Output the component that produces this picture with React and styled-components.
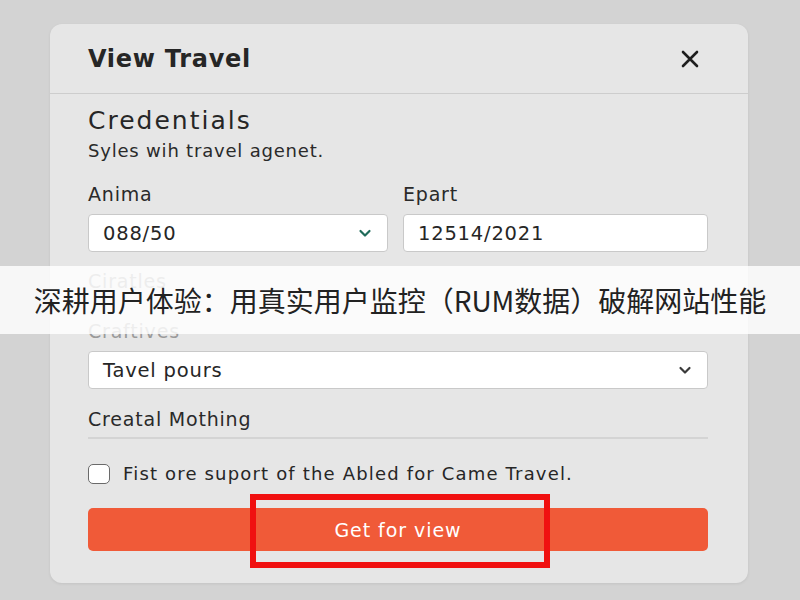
import React from 'react';
import styled, { createGlobalStyle } from 'styled-components';

const GlobalStyle = createGlobalStyle`
  html, body {
    margin: 0;
    padding: 0;
    background: #d3d3d3;
    font-family: "DejaVu Sans", "Noto Sans", sans-serif;
  }
`;

const Page = styled.div`
  position: relative;
  width: 800px;
  height: 600px;
  padding: 24px 52px 17px 50px;
  box-sizing: border-box;
  overflow: hidden;
`;

const Card = styled.div`
  background: #e6e6e6;
  border-radius: 12px;
  height: 100%;
  box-shadow: 0 1px 3px rgba(0, 0, 0, 0.08);
  display: flex;
  flex-direction: column;
`;

const Header = styled.div`
  display: flex;
  align-items: center;
  justify-content: space-between;
  height: 69px;
  padding: 0 48px 0 38px;
  border-bottom: 1px solid #cdcdcd;
`;

const Title = styled.h1`
  margin: 0;
  font-size: 24px;
  font-weight: 700;
  letter-spacing: 0.03em;
  color: #262626;
`;

const Close = styled.button`
  border: 0;
  background: none;
  padding: 0;
  display: flex;
  color: #1e1e1e;
`;

const Body = styled.div`
  padding: 12px 40px 0 38px;
  display: flex;
  flex-direction: column;
  letter-spacing: 0.05em;
`;

const Heading = styled.h2`
  margin: 0;
  font-size: 25px;
  font-weight: 400;
  letter-spacing: 0.08em;
  color: #262626;
  line-height: 30px;
`;

const Sub = styled.p`
  margin: 4px 0 0;
  font-size: 18px;
  color: #2a2a2a;
  line-height: 22px;
`;

const Row = styled.div`
  display: grid;
  grid-template-columns: 300px 1fr;
  gap: 15px;
  margin-top: 20px;
`;

const Field = styled.div`
  display: flex;
  flex-direction: column;
  margin-top: ${p => p.gap || 0}px;
`;

const Label = styled.label`
  font-size: 19px;
  color: ${p => (p.faded ? '#9a9a9a' : '#2a2a2a')};
  line-height: 24px;
  margin-bottom: ${p => (p.last ? 0 : 8)}px;
`;

const Input = styled.div`
  height: 38px;
  box-sizing: border-box;
  background: #fff;
  border: 1px solid #c9c9c9;
  border-radius: 4px;
  display: flex;
  align-items: center;
  justify-content: space-between;
  padding: 0 14px 0 14px;
  font-size: 19.5px;
  color: #262626;
`;

const Section = styled.div`
  margin-top: 18px;
  font-size: 19px;
  line-height: 24px;
  color: #2a2a2a;
  padding-bottom: 6px;
  border-bottom: 2px solid #d4d4d4;
`;

const Check = styled.label`
  display: flex;
  align-items: center;
  gap: 13px;
  margin-top: 25px;
  font-size: 18px;
  line-height: 20px;
  letter-spacing: 0.065em;
  color: #262626;
`;

const Box = styled.span`
  width: 22px;
  height: 20px;
  flex: none;
  box-sizing: border-box;
  border: 1.5px solid #6a6a6a;
  border-radius: 5px;
  background: #fff;
`;

const Button = styled.button`
  margin-top: 24px;
  height: 43px;
  border: 0;
  border-radius: 5px;
  background: #f05a38;
  color: #fff;
  font-family: inherit;
  font-size: 19px;
  letter-spacing: 0.05em;
`;

const Banner = styled.div`
  position: absolute;
  left: 0;
  right: 0;
  top: 266px;
  height: 68px;
  background: rgba(255, 255, 255, 0.82);
  display: flex;
  align-items: center;
  justify-content: center;
  font-family: "Noto Sans CJK SC", sans-serif;
  font-size: 28px;
  color: #222;
`;

const Mark = styled.div`
  position: absolute;
  left: 250px;
  top: 494px;
  width: 300px;
  height: 74px;
  box-sizing: border-box;
  border: 6px solid #f01010;
`;

const Chevron = ({ color }) => (
  <svg width="16" height="16" viewBox="0 0 16 16" fill="none">
    <path d="M3.5 6l4.5 4.5L12.5 6" stroke={color} strokeWidth="2.2" strokeLinecap="round" strokeLinejoin="round" />
  </svg>
);

export default function App() {
  return (
    <Page>
      <GlobalStyle />
      <Card>
        <Header>
          <Title>View Travel</Title>
          <Close>
            <svg width="20" height="20" viewBox="0 0 20 20">
              <path d="M3 3l14 14M17 3L3 17" stroke="currentColor" strokeWidth="2.6" strokeLinecap="round" />
            </svg>
          </Close>
        </Header>
        <Body>
          <Heading>Credentials</Heading>
          <Sub>Syles wih travel agenet.</Sub>
          <Row>
            <Field>
              <Label>Anima</Label>
              <Input>
                088/50
                <Chevron color="#1f6b5a" />
              </Input>
            </Field>
            <Field>
              <Label>Epart</Label>
              <Input>12514/2021</Input>
            </Field>
          </Row>
          <Field gap={17}>
            <Label faded last>Ciratles</Label>
          </Field>
          <Field gap={26}>
            <Label faded>Craftives</Label>
            <Input>
              Tavel pours
              <Chevron color="#3a3a3a" />
            </Input>
          </Field>
          <Section>Creatal Mothing</Section>
          <Check>
            <Box />
            Fist ore suport of the Abled for Came Travel.
          </Check>
          <Button>Get for view</Button>
        </Body>
      </Card>
      <Banner>深耕用户体验：用真实用户监控（RUM数据）破解网站性能</Banner>
      <Mark />
    </Page>
  );
}
